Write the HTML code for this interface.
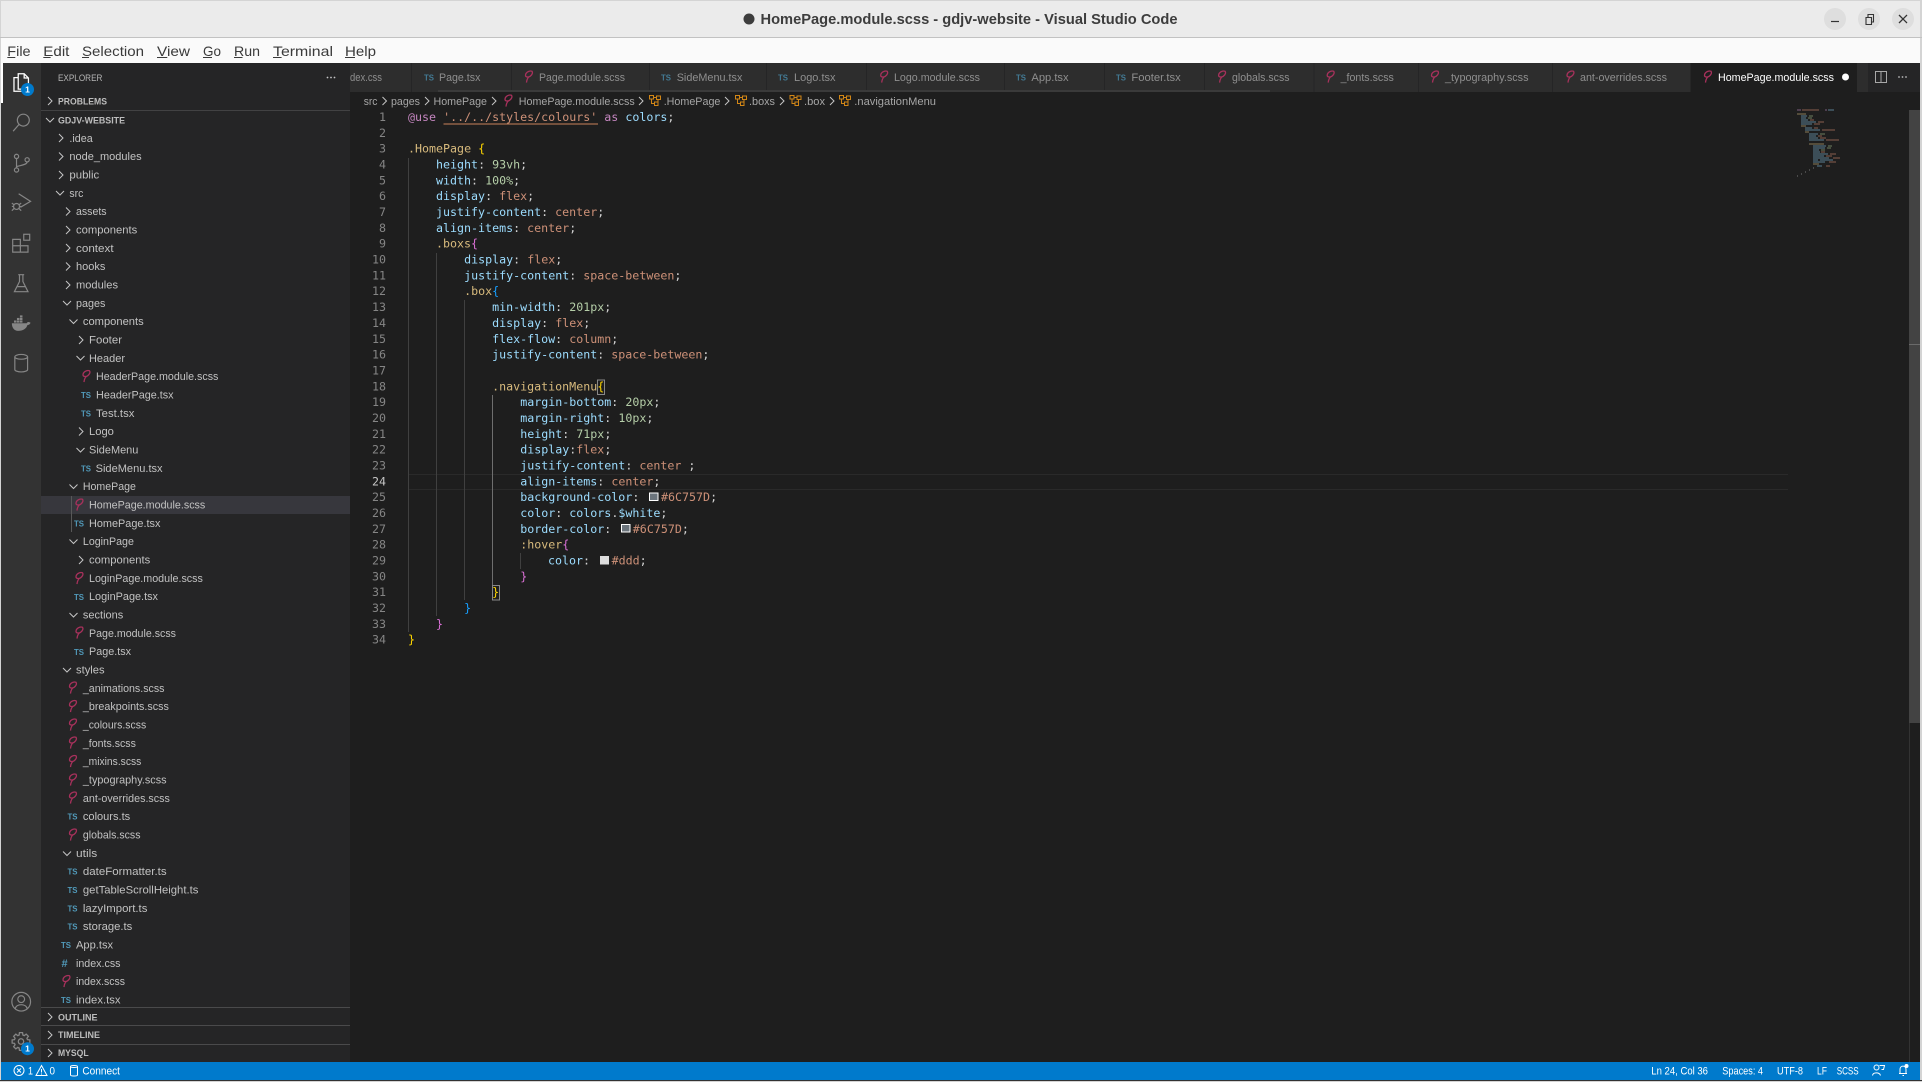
<!DOCTYPE html>
<html lang="en"><head><meta charset="utf-8"><title>HomePage.module.scss - gdjv-website - Visual Studio Code</title>
<style>
html,body{margin:0;padding:0;background:#d4d4d4;width:1922px;height:1082px;overflow:hidden}
svg{display:block}
text{font-family:"Liberation Sans",sans-serif;white-space:pre}
.tr{font-size:11px;fill:#c2c2c2}
.tb{font-size:11px;fill:#8f8f8f}
.bc{font-size:11px;fill:#a6a6a6}
.sh{font-size:9.5px;font-weight:bold;fill:#bdbdbd}
.ts{font-size:8.5px;font-weight:bold;fill:#519aba}
.tsd{font-size:8.5px;font-weight:bold;fill:#437a94}
.mn{font-size:14px;fill:#3a3a3a}
.st{font-size:10.6px;fill:#ffffff}
.ed text,.ed{font-family:"DejaVu Sans Mono","Liberation Mono",monospace;font-size:11.65px}
.ln{fill:#858585;text-anchor:end}
.p{fill:#9cdcfe}.v{fill:#ce9178}.n{fill:#b5cea8}.s{fill:#d7ba7d}.d{fill:#d4d4d4}.k{fill:#c586c0}
.b1{fill:#ffd700}.b2{fill:#da70d6}.b3{fill:#179fff}
.ai{fill:none;stroke:#868686;stroke-width:1.4}
</style></head><body>
<svg xmlns="http://www.w3.org/2000/svg" width="1922" height="1082" viewBox="0 0 1922 1082">
<defs>
<symbol id="cr" viewBox="0 0 6 10" width="6" height="10"><path d="M1 1l4 4-4 4" fill="none" stroke="#c5c5c5" stroke-width="1"/></symbol>
<symbol id="cd" viewBox="0 0 10 6" width="10" height="6"><path d="M1 1l4 4 4-4" fill="none" stroke="#c5c5c5" stroke-width="1"/></symbol>
<symbol id="sa" viewBox="0 0 10 14" width="10" height="14"><path d="M8.4 1.2C5.500.4 2 2.600 2 5.400c0 2 3 2 4.600.9C8.600 5 9.600 2.600 8.400 1.200zM5.400 6.800C4 8.200 3.200 10 3 12.600" fill="none" stroke="#a8315c" stroke-width="1.300"/></symbol>
<symbol id="co" viewBox="0 0 14 14" width="14" height="14"><path d="M1.500 3V1.500h4V5h-4zM3.500 5v4.500h3M6.500 8h3.500v3.500H6.500zM5.500 3.500h3M8.500 2h4v3.500h-4zM10 5.500v2.500" fill="none" stroke="#d18616" stroke-width="1"/></symbol>
</defs>

<!-- window frame -->
<rect width="1922" height="1082" fill="#d4d4d4"/>
<rect x="1" y="1" width="1919" height="36" fill="#ebebeb"/>
<rect x="0" y="37" width="1922" height="1" fill="#c2c2c2"/>
<rect x="1" y="38" width="1919" height="25" fill="#fafafa"/>

<!-- title -->
<circle cx="749" cy="19" r="5.500" fill="#3d3d3d"/>
<text x="760.500" y="24" font-size="14.600" font-weight="bold" fill="#3d3d3d" textLength="417" lengthAdjust="spacingAndGlyphs">HomePage.module.scss - gdjv-website - Visual Studio Code</text>
<circle cx="1835" cy="19" r="11" fill="#dedede"/><circle cx="1869" cy="19" r="11" fill="#dedede"/><circle cx="1903" cy="19" r="11" fill="#dedede"/>
<path d="M1831 21.500h8" stroke="#333" stroke-width="1.200"/>
<path d="M1866 17.500h5.500v7h-5.500zM1868 17v-2.500h5.500v7.500h-2" fill="none" stroke="#333" stroke-width="1.100"/>
<path d="M1899 15l8 8M1907 15l-8 8" stroke="#333" stroke-width="1.300"/>

<!-- menu -->
<g class="menu">
<text class="mn" x="7.300" y="56" textLength="23.300" lengthAdjust="spacingAndGlyphs">File</text>
<text class="mn" x="43.300" y="56" textLength="26.100" lengthAdjust="spacingAndGlyphs">Edit</text>
<text class="mn" x="82" y="56" textLength="62" lengthAdjust="spacingAndGlyphs">Selection</text>
<text class="mn" x="157" y="56" textLength="33" lengthAdjust="spacingAndGlyphs">View</text>
<text class="mn" x="203" y="56" textLength="18" lengthAdjust="spacingAndGlyphs">Go</text>
<text class="mn" x="234" y="56" textLength="26" lengthAdjust="spacingAndGlyphs">Run</text>
<text class="mn" x="273" y="56" textLength="60" lengthAdjust="spacingAndGlyphs">Terminal</text>
<text class="mn" x="345" y="56" textLength="31" lengthAdjust="spacingAndGlyphs">Help</text>
<path d="M7.300 57.500h8M43.300 57.500h7.300M82 57.500h7M157 57.500h10.300M203 57.500h9M234 57.500h8.500M273 57.500h8.600M345 57.500h10" stroke="#3a3a3a" stroke-width="1"/>
</g>

<!-- main backgrounds -->
<rect x="1" y="63" width="40" height="999" fill="#333333"/>
<rect x="41" y="63" width="309" height="999" fill="#252526"/>
<rect x="350" y="63" width="1570" height="999" fill="#1e1e1e"/>
<rect x="350" y="63" width="1570" height="29" fill="#252526"/>
<rect x="1" y="1062" width="1919" height="18" fill="#007acc"/>
<rect x="0" y="1080" width="1922" height="1" fill="#333"/>

<!-- tabs -->
<g fill="#2d2d2d">
<rect x="350" y="63" width="61" height="29"/><rect x="412" y="63" width="99" height="29"/><rect x="512" y="63" width="137" height="29"/><rect x="650" y="63" width="116" height="29"/><rect x="767" y="63" width="99" height="29"/><rect x="867" y="63" width="137" height="29"/><rect x="1005" y="63" width="99" height="29"/><rect x="1105" y="63" width="99" height="29"/><rect x="1205" y="63" width="108.500" height="29"/><rect x="1314.500" y="63" width="103.500" height="29"/><rect x="1419" y="63" width="133" height="29"/><rect x="1553" y="63" width="137.500" height="29"/>
<rect x="1857" y="63" width="11" height="29"/>
</g>
<rect x="1690.500" y="63" width="166.500" height="29" fill="#1e1e1e"/>
<rect x="438" y="90" width="832" height="2" fill="#3a3a3a"/>
<text class="tb" x="350" y="81" textLength="32" lengthAdjust="spacingAndGlyphs">dex.css</text>
<text class="tsd" x="424" y="80.500" textLength="10" lengthAdjust="spacingAndGlyphs">TS</text><text class="tb" x="439" y="81" textLength="41.400" lengthAdjust="spacingAndGlyphs">Page.tsx</text>
<use href="#sa" x="523.500" y="70"/><text class="tb" x="539" y="81" textLength="86" lengthAdjust="spacingAndGlyphs">Page.module.scss</text>
<text class="tsd" x="661" y="80.500" textLength="10" lengthAdjust="spacingAndGlyphs">TS</text><text class="tb" x="676.700" y="81" textLength="65.700" lengthAdjust="spacingAndGlyphs">SideMenu.tsx</text>
<text class="tsd" x="778" y="80.500" textLength="10" lengthAdjust="spacingAndGlyphs">TS</text><text class="tb" x="794" y="81" textLength="41.500" lengthAdjust="spacingAndGlyphs">Logo.tsx</text>
<use href="#sa" x="878.700" y="70"/><text class="tb" x="894" y="81" textLength="86" lengthAdjust="spacingAndGlyphs">Logo.module.scss</text>
<text class="tsd" x="1016" y="80.500" textLength="10" lengthAdjust="spacingAndGlyphs">TS</text><text class="tb" x="1031.400" y="81" textLength="37.200" lengthAdjust="spacingAndGlyphs">App.tsx</text>
<text class="tsd" x="1116" y="80.500" textLength="10" lengthAdjust="spacingAndGlyphs">TS</text><text class="tb" x="1131.400" y="81" textLength="49.400" lengthAdjust="spacingAndGlyphs">Footer.tsx</text>
<use href="#sa" x="1216.600" y="70"/><text class="tb" x="1232" y="81" textLength="57.500" lengthAdjust="spacingAndGlyphs">globals.scss</text>
<use href="#sa" x="1325.200" y="70"/><text class="tb" x="1340.600" y="81" textLength="53.300" lengthAdjust="spacingAndGlyphs">_fonts.scss</text>
<use href="#sa" x="1429.500" y="70"/><text class="tb" x="1445" y="81" textLength="83.500" lengthAdjust="spacingAndGlyphs">_typography.scss</text>
<use href="#sa" x="1565" y="70"/><text class="tb" x="1580" y="81" textLength="87" lengthAdjust="spacingAndGlyphs">ant-overrides.scss</text>
<use href="#sa" x="1702.500" y="70"/><text x="1718" y="81" font-size="11" fill="#ffffff" textLength="116" lengthAdjust="spacingAndGlyphs">HomePage.module.scss</text>
<circle cx="1845.500" cy="77" r="3.500" fill="#fff"/>
<path d="M1875.500 71.500h11v11h-11zM1881 71.500v11" fill="none" stroke="#a8a8a8" stroke-width="1"/>
<g fill="#b8b8b8"><circle cx="1899" cy="77" r=".9"/><circle cx="1902.500" cy="77" r=".9"/><circle cx="1906" cy="77" r=".9"/></g>

<!-- breadcrumbs -->
<g>
<text class="bc" x="363.700" y="105" textLength="13.800" lengthAdjust="spacingAndGlyphs">src</text><use href="#cr" x="381.500" y="96"/>
<text class="bc" x="391" y="105" textLength="29" lengthAdjust="spacingAndGlyphs">pages</text><use href="#cr" x="424" y="96"/>
<text class="bc" x="433.500" y="105" textLength="53.500" lengthAdjust="spacingAndGlyphs">HomePage</text><use href="#cr" x="491" y="96"/>
<use href="#sa" x="503" y="94"/><text class="bc" x="518.800" y="105" textLength="115.900" lengthAdjust="spacingAndGlyphs">HomePage.module.scss</text><use href="#cr" x="638" y="96"/>
<use href="#co" x="648" y="94"/><text class="bc" x="663.700" y="105" textLength="56.700" lengthAdjust="spacingAndGlyphs">.HomePage</text><use href="#cr" x="724" y="96"/>
<use href="#co" x="734" y="94"/><text class="bc" x="749" y="105" textLength="26" lengthAdjust="spacingAndGlyphs">.boxs</text><use href="#cr" x="779" y="96"/>
<use href="#co" x="788.500" y="94"/><text class="bc" x="804" y="105" textLength="21" lengthAdjust="spacingAndGlyphs">.box</text><use href="#cr" x="829" y="96"/>
<use href="#co" x="838" y="94"/><text class="bc" x="854.300" y="105" textLength="81.700" lengthAdjust="spacingAndGlyphs">.navigationMenu</text>
</g>

<!-- activity bar -->
<rect x="1" y="63" width="2" height="40" fill="#ffffff"/>
<g transform="translate(11 72.500) scale(.85)" fill="none" stroke="#fff" stroke-width="1.500"><path d="M8.500 1.500h7l5 5v13h-12zM15.500 1.500v5h5"/><path d="M8.500 6h-5v16h12v-2.500"/></g>
<g class="ai" transform="translate(11 112.500) scale(.85)"><circle cx="14.500" cy="9" r="7"/><path d="M9.500 14L2.500 22"/></g>
<g class="ai" transform="translate(11 153) scale(.85)"><circle cx="6.500" cy="4" r="2.500"/><circle cx="6.500" cy="20" r="2.500"/><circle cx="19" cy="8" r="2.500"/><path d="M6.500 6.500v11M19 10.500c0 3.500-8 4-12.500 5.500"/></g>
<g class="ai" transform="translate(11 192) scale(.85)"><path d="M9 2l14 9-12 7"/><circle cx="6.500" cy="17" r="3.500"/><path d="M1 13l2.500 2M12 13l-2.500 2M1 17h2M10 17h2M1 22l2.500-2.500M12 22l-2.500-2.500"/></g>
<g class="ai" transform="translate(11 233) scale(.85)"><path d="M2 7.500h9v7.500H2zM2 15h9v7.500H2zM11 15h9v7.500h-9z"/><rect x="15" y="1.500" width="7" height="7"/></g>
<g class="ai" transform="translate(11 273) scale(.85)"><path d="M8.500 2h7M10 2v8L4 22h16L14 10V2M7 16h10"/></g>
<g transform="translate(11 313) scale(.85)" fill="#868686"><path d="M1 12h17.500c1-2 3-1.500 4.500-.5-.8 2-2 2.700-3.700 2.700C18 18.500 14 21 8.500 21 3.500 21 1 17 1 12z"/><rect x="3.500" y="8.800" width="3" height="2.500"/><rect x="7" y="8.800" width="3" height="2.500"/><rect x="10.500" y="8.800" width="3" height="2.500"/><rect x="7" y="5.800" width="3" height="2.500"/><rect x="10.500" y="5.800" width="3" height="2.500"/><rect x="10.500" y="2.800" width="3" height="2.500"/></g>
<g class="ai" transform="translate(11 353) scale(.85)"><ellipse cx="12" cy="4.500" rx="7.500" ry="2.800"/><path d="M4.500 4.500v15c0 1.500 3.300 2.800 7.500 2.800s7.500-1.300 7.500-2.800v-15"/></g>
<g class="ai" transform="translate(11 991.500) scale(.85)"><circle cx="12" cy="12" r="11"/><circle cx="12" cy="9" r="4"/><path d="M5 20c1.500-6 12.500-6 14 0"/></g>
<g class="ai" transform="translate(21 1041.500) scale(.9)"><path d="M-2.070-7.210L-1.740-9.850 1.740-9.850 2.070-7.210 3.630-6.560 5.730-8.190 8.190-5.730 6.560-3.630 7.210-2.070 9.850-1.740 9.850 1.740 7.210 2.070 6.560 3.630 8.190 5.730 5.730 8.190 3.630 6.560 2.070 7.210 1.740 9.850-1.740 9.850-2.070 7.210-3.630 6.560-5.730 8.190-8.190 5.730-6.560 3.630-7.210 2.070-9.850 1.740-9.850-1.740-7.210-2.070-6.560-3.630-8.190-5.730-5.730-8.190-3.630-6.560z"/><circle r="3"/></g>
<circle cx="27.500" cy="89.500" r="6.500" fill="#007acc"/><text x="27.500" y="92.500" font-size="8.500" font-weight="bold" fill="#fff" text-anchor="middle">1</text>
<circle cx="27.500" cy="1048.700" r="6.500" fill="#007acc"/><text x="27.500" y="1051.700" font-size="8.500" font-weight="bold" fill="#fff" text-anchor="middle">1</text>

<!-- sidebar headers -->
<text x="58" y="81" font-size="9.500" fill="#b5b5b5" textLength="44.400" lengthAdjust="spacingAndGlyphs">EXPLORER</text>
<g fill="#c5c5c5"><circle cx="327.500" cy="77.500" r=".9"/><circle cx="331" cy="77.500" r=".9"/><circle cx="334.500" cy="77.500" r=".9"/></g>
<use href="#cr" x="47" y="96"/><text class="sh" x="58" y="104.500" textLength="49" lengthAdjust="spacingAndGlyphs">PROBLEMS</text>
<rect x="41" y="110" width="309" height="1" fill="#424243"/>
<use href="#cd" x="45" y="117"/><text class="sh" x="58" y="123.500" textLength="67" lengthAdjust="spacingAndGlyphs">GDJV-WEBSITE</text>
<rect x="41" y="496" width="309" height="18" fill="#37373d"/>
<rect x="71" y="496" width="1" height="36" fill="#585858"/>

<!-- tree -->
<g>
<use href="#cr" x="58" y="133"/><text class="tr" x="69.400" y="142" textLength="23.300" lengthAdjust="spacingAndGlyphs">.idea</text>
<use href="#cr" x="58" y="151.500"/><text class="tr" x="69.400" y="160" textLength="72.200" lengthAdjust="spacingAndGlyphs">node_modules</text>
<use href="#cr" x="58" y="170"/><text class="tr" x="69.400" y="178.700" textLength="29.800" lengthAdjust="spacingAndGlyphs">public</text>
<use href="#cd" x="55" y="190"/><text class="tr" x="69.400" y="197" textLength="13.900" lengthAdjust="spacingAndGlyphs">src</text>
<use href="#cr" x="65" y="206.500"/><text class="tr" x="76" y="215" textLength="30.600" lengthAdjust="spacingAndGlyphs">assets</text>
<use href="#cr" x="65" y="225"/><text class="tr" x="76" y="233.700" textLength="61.200" lengthAdjust="spacingAndGlyphs">components</text>
<use href="#cr" x="65" y="243"/><text class="tr" x="76" y="252" textLength="37.600" lengthAdjust="spacingAndGlyphs">context</text>
<use href="#cr" x="65" y="261.500"/><text class="tr" x="76" y="270" textLength="29.400" lengthAdjust="spacingAndGlyphs">hooks</text>
<use href="#cr" x="65" y="280"/><text class="tr" x="76" y="288.600" textLength="42" lengthAdjust="spacingAndGlyphs">modules</text>
<use href="#cd" x="62" y="300"/><text class="tr" x="76" y="307" textLength="29.400" lengthAdjust="spacingAndGlyphs">pages</text>
<use href="#cd" x="68.500" y="318.500"/><text class="tr" x="82.900" y="325" textLength="60.800" lengthAdjust="spacingAndGlyphs">components</text>
<use href="#cr" x="78" y="335"/><text class="tr" x="89" y="343.600" textLength="33" lengthAdjust="spacingAndGlyphs">Footer</text>
<use href="#cd" x="75.500" y="355"/><text class="tr" x="89" y="362" textLength="36" lengthAdjust="spacingAndGlyphs">Header</text>
<use href="#sa" x="81" y="369.500"/><text class="tr" x="96" y="380" textLength="122.400" lengthAdjust="spacingAndGlyphs">HeaderPage.module.scss</text>
<text class="ts" x="81" y="398" textLength="10" lengthAdjust="spacingAndGlyphs">TS</text><text class="tr" x="96" y="398.600" textLength="77.600" lengthAdjust="spacingAndGlyphs">HeaderPage.tsx</text>
<text class="ts" x="81" y="416.500" textLength="10" lengthAdjust="spacingAndGlyphs">TS</text><text class="tr" x="96" y="417" textLength="38.400" lengthAdjust="spacingAndGlyphs">Test.tsx</text>
<use href="#cr" x="78" y="426.500"/><text class="tr" x="89" y="435" textLength="24.900" lengthAdjust="spacingAndGlyphs">Logo</text>
<use href="#cd" x="75.500" y="447"/><text class="tr" x="89" y="453.600" textLength="49.400" lengthAdjust="spacingAndGlyphs">SideMenu</text>
<text class="ts" x="81" y="471.500" textLength="10" lengthAdjust="spacingAndGlyphs">TS</text><text class="tr" x="95.600" y="471.900" textLength="67" lengthAdjust="spacingAndGlyphs">SideMenu.tsx</text>
<use href="#cd" x="68.500" y="483.500"/><text class="tr" x="82.900" y="490" textLength="53" lengthAdjust="spacingAndGlyphs">HomePage</text>
<use href="#sa" x="74" y="498"/><text class="tr" x="89" y="508.600" textLength="116.300" lengthAdjust="spacingAndGlyphs">HomePage.module.scss</text>
<text class="ts" x="74" y="526.500" textLength="10" lengthAdjust="spacingAndGlyphs">TS</text><text class="tr" x="89" y="526.900" textLength="71.400" lengthAdjust="spacingAndGlyphs">HomePage.tsx</text>
<use href="#cd" x="68.500" y="538.500"/><text class="tr" x="82.900" y="545" textLength="51" lengthAdjust="spacingAndGlyphs">LoginPage</text>
<use href="#cr" x="78" y="555"/><text class="tr" x="89" y="563.600" textLength="61.200" lengthAdjust="spacingAndGlyphs">components</text>
<use href="#sa" x="74" y="571.500"/><text class="tr" x="89" y="581.900" textLength="113.900" lengthAdjust="spacingAndGlyphs">LoginPage.module.scss</text>
<text class="ts" x="74" y="600" textLength="10" lengthAdjust="spacingAndGlyphs">TS</text><text class="tr" x="89" y="600" textLength="69" lengthAdjust="spacingAndGlyphs">LoginPage.tsx</text>
<use href="#cd" x="68.500" y="612"/><text class="tr" x="82.900" y="618.600" textLength="40.400" lengthAdjust="spacingAndGlyphs">sections</text>
<use href="#sa" x="74" y="626"/><text class="tr" x="89" y="636.900" textLength="87" lengthAdjust="spacingAndGlyphs">Page.module.scss</text>
<text class="ts" x="74" y="655" textLength="10" lengthAdjust="spacingAndGlyphs">TS</text><text class="tr" x="89" y="655.200" textLength="42" lengthAdjust="spacingAndGlyphs">Page.tsx</text>
<use href="#cd" x="62" y="667"/><text class="tr" x="76" y="673.600" textLength="28.600" lengthAdjust="spacingAndGlyphs">styles</text>
<use href="#sa" x="67.500" y="681"/><text class="tr" x="82.900" y="691.900" textLength="81.600" lengthAdjust="spacingAndGlyphs">_animations.scss</text>
<use href="#sa" x="67.500" y="699.500"/><text class="tr" x="82.900" y="710.200" textLength="86" lengthAdjust="spacingAndGlyphs">_breakpoints.scss</text>
<use href="#sa" x="67.500" y="718"/><text class="tr" x="82.900" y="728.600" textLength="63.300" lengthAdjust="spacingAndGlyphs">_colours.scss</text>
<use href="#sa" x="67.500" y="736"/><text class="tr" x="82.900" y="746.900" textLength="53" lengthAdjust="spacingAndGlyphs">_fonts.scss</text>
<use href="#sa" x="67.500" y="754.500"/><text class="tr" x="82.900" y="765.200" textLength="58.400" lengthAdjust="spacingAndGlyphs">_mixins.scss</text>
<use href="#sa" x="67.500" y="773"/><text class="tr" x="82.900" y="783.600" textLength="83.700" lengthAdjust="spacingAndGlyphs">_typography.scss</text>
<use href="#sa" x="67.500" y="791"/><text class="tr" x="82.900" y="801.900" textLength="87" lengthAdjust="spacingAndGlyphs">ant-overrides.scss</text>
<text class="ts" x="67.500" y="819.500" textLength="10" lengthAdjust="spacingAndGlyphs">TS</text><text class="tr" x="82.900" y="820.200" textLength="47.300" lengthAdjust="spacingAndGlyphs">colours.ts</text>
<use href="#sa" x="67.500" y="828"/><text class="tr" x="82.900" y="838.500" textLength="57.600" lengthAdjust="spacingAndGlyphs">globals.scss</text>
<use href="#cd" x="62" y="850.500"/><text class="tr" x="76" y="856.900" textLength="21.200" lengthAdjust="spacingAndGlyphs">utils</text>
<text class="ts" x="67.500" y="874.500" textLength="10" lengthAdjust="spacingAndGlyphs">TS</text><text class="tr" x="82.900" y="875.200" textLength="83.700" lengthAdjust="spacingAndGlyphs">dateFormatter.ts</text>
<text class="ts" x="67.500" y="893" textLength="10" lengthAdjust="spacingAndGlyphs">TS</text><text class="tr" x="82.900" y="893.500" textLength="115.500" lengthAdjust="spacingAndGlyphs">getTableScrollHeight.ts</text>
<text class="ts" x="67.500" y="911.500" textLength="10" lengthAdjust="spacingAndGlyphs">TS</text><text class="tr" x="82.900" y="911.900" textLength="64.500" lengthAdjust="spacingAndGlyphs">lazyImport.ts</text>
<text class="ts" x="67.500" y="929.500" textLength="10" lengthAdjust="spacingAndGlyphs">TS</text><text class="tr" x="82.900" y="930.200" textLength="49.400" lengthAdjust="spacingAndGlyphs">storage.ts</text>
<text class="ts" x="61" y="948" textLength="10" lengthAdjust="spacingAndGlyphs">TS</text><text class="tr" x="76" y="948.500" textLength="37.100" lengthAdjust="spacingAndGlyphs">App.tsx</text>
<text x="61.500" y="967" font-size="11" font-weight="bold" fill="#519aba">#</text><text class="tr" x="76" y="966.900" textLength="44.500" lengthAdjust="spacingAndGlyphs">index.css</text>
<use href="#sa" x="61" y="974.500"/><text class="tr" x="76" y="985.200" textLength="49" lengthAdjust="spacingAndGlyphs">index.scss</text>
<text class="ts" x="61" y="1003" textLength="10" lengthAdjust="spacingAndGlyphs">TS</text><text class="tr" x="76" y="1003.500" textLength="44.500" lengthAdjust="spacingAndGlyphs">index.tsx</text>
</g>

<!-- bottom panes -->
<rect x="41" y="1007" width="309" height="55" fill="#252526"/>
<g fill="#4a4a4b"><rect x="41" y="1007" width="309" height="1"/><rect x="41" y="1025" width="309" height="1"/><rect x="41" y="1044" width="309" height="1"/></g>
<use href="#cr" x="47" y="1012"/><text class="sh" x="58" y="1020.500" textLength="39.500" lengthAdjust="spacingAndGlyphs">OUTLINE</text>
<use href="#cr" x="47" y="1030"/><text class="sh" x="58" y="1038" textLength="42" lengthAdjust="spacingAndGlyphs">TIMELINE</text>
<use href="#cr" x="47" y="1048"/><text class="sh" x="58" y="1056" textLength="30.600" lengthAdjust="spacingAndGlyphs">MYSQL</text>

<!-- editor decorations -->
<rect x="408" y="474" width="1380" height="1" fill="#2a2a2a"/>
<rect x="408" y="489" width="1380" height="1" fill="#2a2a2a"/>
<g fill="#404040">
<rect x="408" y="158" width="1" height="474"/>
<rect x="436" y="253" width="1" height="363"/>
<rect x="464" y="300" width="1" height="300"/>
<rect x="520" y="553" width="1" height="16" />
</g>
<rect x="492" y="395" width="1" height="190" fill="#6e6e6e"/>

<!-- code -->
<g class="ed">
<text class="ln" x="386" y="121">1</text><text class="ln" x="386" y="136.800">2</text><text class="ln" x="386" y="152.700">3</text><text class="ln" x="386" y="168.500">4</text><text class="ln" x="386" y="184.400">5</text><text class="ln" x="386" y="200.200">6</text><text class="ln" x="386" y="216">7</text><text class="ln" x="386" y="231.900">8</text><text class="ln" x="386" y="247.700">9</text><text class="ln" x="386" y="263.600">10</text><text class="ln" x="386" y="279.400">11</text><text class="ln" x="386" y="295.200">12</text><text class="ln" x="386" y="311.100">13</text><text class="ln" x="386" y="326.900">14</text><text class="ln" x="386" y="342.800">15</text><text class="ln" x="386" y="358.600">16</text><text class="ln" x="386" y="374.400">17</text><text class="ln" x="386" y="390.300">18</text><text class="ln" x="386" y="406.100">19</text><text class="ln" x="386" y="422">20</text><text class="ln" x="386" y="437.800">21</text><text class="ln" x="386" y="453.600">22</text><text class="ln" x="386" y="469.500">23</text><text class="ln" x="386" y="485.300" style="fill:#c6c6c6">24</text><text class="ln" x="386" y="501.200">25</text><text class="ln" x="386" y="517">26</text><text class="ln" x="386" y="532.800">27</text><text class="ln" x="386" y="548.700">28</text><text class="ln" x="386" y="564.500">29</text><text class="ln" x="386" y="580.400">30</text><text class="ln" x="386" y="596.200">31</text><text class="ln" x="386" y="612">32</text><text class="ln" x="386" y="627.900">33</text><text class="ln" x="386" y="643.700">34</text>

<text x="408" y="121"><tspan class="k">@use</tspan> <tspan class="v">'../../styles/colours'</tspan> <tspan class="k">as</tspan> <tspan class="p">colors</tspan><tspan class="d">;</tspan></text>
<text x="408" y="152.700"><tspan class="s">.HomePage</tspan> <tspan class="b1">{</tspan></text>
<text x="436" y="168.500"><tspan class="p">height</tspan><tspan class="d">: </tspan><tspan class="n">93vh</tspan><tspan class="d">;</tspan></text>
<text x="436" y="184.400"><tspan class="p">width</tspan><tspan class="d">: </tspan><tspan class="n">100%</tspan><tspan class="d">;</tspan></text>
<text x="436" y="200.200"><tspan class="p">display</tspan><tspan class="d">: </tspan><tspan class="v">flex</tspan><tspan class="d">;</tspan></text>
<text x="436" y="216"><tspan class="p">justify-content</tspan><tspan class="d">: </tspan><tspan class="v">center</tspan><tspan class="d">;</tspan></text>
<text x="436" y="231.900"><tspan class="p">align-items</tspan><tspan class="d">: </tspan><tspan class="v">center</tspan><tspan class="d">;</tspan></text>
<text x="436" y="247.700"><tspan class="s">.boxs</tspan><tspan class="b2">{</tspan></text>
<text x="464.100" y="263.600"><tspan class="p">display</tspan><tspan class="d">: </tspan><tspan class="v">flex</tspan><tspan class="d">;</tspan></text>
<text x="464.100" y="279.400"><tspan class="p">justify-content</tspan><tspan class="d">: </tspan><tspan class="v">space-between</tspan><tspan class="d">;</tspan></text>
<text x="464.100" y="295.200"><tspan class="s">.box</tspan><tspan class="b3">{</tspan></text>
<text x="492.100" y="311.100"><tspan class="p">min-width</tspan><tspan class="d">: </tspan><tspan class="n">201px</tspan><tspan class="d">;</tspan></text>
<text x="492.100" y="326.900"><tspan class="p">display</tspan><tspan class="d">: </tspan><tspan class="v">flex</tspan><tspan class="d">;</tspan></text>
<text x="492.100" y="342.800"><tspan class="p">flex-flow</tspan><tspan class="d">: </tspan><tspan class="v">column</tspan><tspan class="d">;</tspan></text>
<text x="492.100" y="358.600"><tspan class="p">justify-content</tspan><tspan class="d">: </tspan><tspan class="v">space-between</tspan><tspan class="d">;</tspan></text>
<text x="492.100" y="390.300"><tspan class="s">.navigationMenu</tspan><tspan class="b1">{</tspan></text>
<text x="520.200" y="406.100"><tspan class="p">margin-bottom</tspan><tspan class="d">: </tspan><tspan class="n">20px</tspan><tspan class="d">;</tspan></text>
<text x="520.200" y="422"><tspan class="p">margin-right</tspan><tspan class="d">: </tspan><tspan class="n">10px</tspan><tspan class="d">;</tspan></text>
<text x="520.200" y="437.800"><tspan class="p">height</tspan><tspan class="d">: </tspan><tspan class="n">71px</tspan><tspan class="d">;</tspan></text>
<text x="520.200" y="453.600"><tspan class="p">display</tspan><tspan class="d">:</tspan><tspan class="v">flex</tspan><tspan class="d">;</tspan></text>
<text x="520.200" y="469.500"><tspan class="p">justify-content</tspan><tspan class="d">: </tspan><tspan class="v">center</tspan><tspan class="d"> ;</tspan></text>
<text x="520.200" y="485.300"><tspan class="p">align-items</tspan><tspan class="d">: </tspan><tspan class="v">center</tspan><tspan class="d">;</tspan></text>
<text x="520.200" y="501.200"><tspan class="p">background-color</tspan><tspan class="d">: </tspan></text>
<text x="661" y="501.200"><tspan class="v">#6C757D</tspan><tspan class="d">;</tspan></text>
<text x="520.200" y="517"><tspan class="p">color</tspan><tspan class="d">: </tspan><tspan class="p">colors</tspan><tspan class="d">.</tspan><tspan class="p">$white</tspan><tspan class="d">;</tspan></text>
<text x="520.200" y="532.800"><tspan class="p">border-color</tspan><tspan class="d">: </tspan></text>
<text x="632.800" y="532.800"><tspan class="v">#6C757D</tspan><tspan class="d">;</tspan></text>
<text x="520.200" y="548.700"><tspan class="s">:hover</tspan><tspan class="b2">{</tspan></text>
<text x="548" y="564.500"><tspan class="p">color</tspan><tspan class="d">: </tspan></text>
<text x="611.600" y="564.500"><tspan class="v">#ddd</tspan><tspan class="d">;</tspan></text>
<text x="520.200" y="580.400" class="b2">}</text>
<text x="492.100" y="596.200" class="b1">}</text>
<text x="464.100" y="612" class="b3">}</text>
<text x="436" y="627.900" class="b2">}</text>
<text x="408" y="643.700" class="b1">}</text>
</g>
<rect x="443.500" y="123.500" width="154.500" height="1" fill="#c9825a"/>
<rect x="649.500" y="493" width="8.500" height="7.500" fill="#6C757D" stroke="#fff" stroke-width="1"/>
<rect x="621.500" y="524.500" width="8.500" height="7.500" fill="#6C757D" stroke="#fff" stroke-width="1"/>
<rect x="600" y="556" width="9" height="8.500" fill="#dddddd"/>
<rect x="597.500" y="380" width="7" height="14.500" fill="none" stroke="#888" stroke-width="1"/>
<rect x="492.500" y="585.500" width="7" height="14.500" fill="none" stroke="#888" stroke-width="1"/>

<!-- minimap -->
<g fill="none" stroke-width="1.100">
<path stroke="#5a7d92" d="M1801 116h6M1801 118h5M1801 120h7M1801 122h15M1801 124h11M1805 128h7M1805 130h15M1809 134h9M1809 136h7M1809 138h9M1809 140h15M1813 146h13M1813 148h12M1813 150h6M1813 152h7M1813 154h15M1813 156h11M1813 158h16M1813 160h5M1820 160h13M1813 162h12M1817 166h5M1828 110h6"/>
<path stroke="#8a5f4f" d="M1802 110h17M1810 120h4M1818 122h6M1814 124h6M1814 128h4M1822 130h13M1818 136h4M1820 138h6M1826 140h13M1821 152h4M1830 154h6M1826 156h6M1833 158h7M1829 162h7M1826 166h4"/>
<path stroke="#6d7d5f" d="M1809 116h4M1808 118h4M1820 134h5M1828 146h4M1827 148h4M1821 150h4"/>
<path stroke="#8a7a55" d="M1797 114h9M1801 126h5M1805 132h4M1809 144h15M1813 164h6"/>
<path stroke="#7d5f80" d="M1797 110h4M1825 110h2"/>
<path stroke="#777" d="M1813 168h1M1809 170h1M1805 172h1M1801 174h1M1797 176h1"/>
</g>

<!-- scrollbar -->
<rect x="1909" y="110" width="1" height="952" fill="#333"/>
<rect x="1909" y="110" width="11" height="613" fill="#434343"/>
<rect x="1909" y="344" width="11" height="1" fill="#6a6a6a"/>

<!-- status bar -->
<g fill="none" stroke="#fff" stroke-width="1">
<circle cx="19" cy="1070.500" r="5"/><path d="M17 1068.500l4 4M21 1068.500l-4 4"/>
<path d="M41.500 1065.500l5.500 10h-11zM41.500 1069v3.500M41.500 1073.500v1"/>
<path d="M70.500 1066.500c0-1.300 7-1.300 7 0v8.500c0 1.300-7 1.300-7 0zM70.500 1066.500c0 1.300 7 1.300 7 0"/>
<circle cx="1876.500" cy="1067.500" r="2.500"/><path d="M1872.500 1075.500c.5-3.500 7-3.500 8 0M1879.500 1065.500h5l-1 4h-2"/>
<path d="M1899 1073.500h8M1900 1073.500v-4c0-4.500 6-4.500 6 0v4M1902.500 1075.500h1.500"/>
</g>
<circle cx="1906.500" cy="1066" r="2" fill="#fff"/>
<text class="st" x="28" y="1074.500" textLength="5" lengthAdjust="spacingAndGlyphs">1</text>
<text class="st" x="49.500" y="1074.500" textLength="5.500" lengthAdjust="spacingAndGlyphs">0</text>
<text class="st" x="82.400" y="1074.500" textLength="37.600" lengthAdjust="spacingAndGlyphs">Connect</text>
<text class="st" x="1651.300" y="1074.500" textLength="56.700" lengthAdjust="spacingAndGlyphs">Ln 24, Col 36</text>
<text class="st" x="1722.300" y="1074.500" textLength="40.700" lengthAdjust="spacingAndGlyphs">Spaces: 4</text>
<text class="st" x="1777" y="1074.500" textLength="26" lengthAdjust="spacingAndGlyphs">UTF-8</text>
<text class="st" x="1817" y="1074.500" textLength="10" lengthAdjust="spacingAndGlyphs">LF</text>
<text class="st" x="1836.700" y="1074.500" textLength="22" lengthAdjust="spacingAndGlyphs">SCSS</text>
</svg>
</body></html>
